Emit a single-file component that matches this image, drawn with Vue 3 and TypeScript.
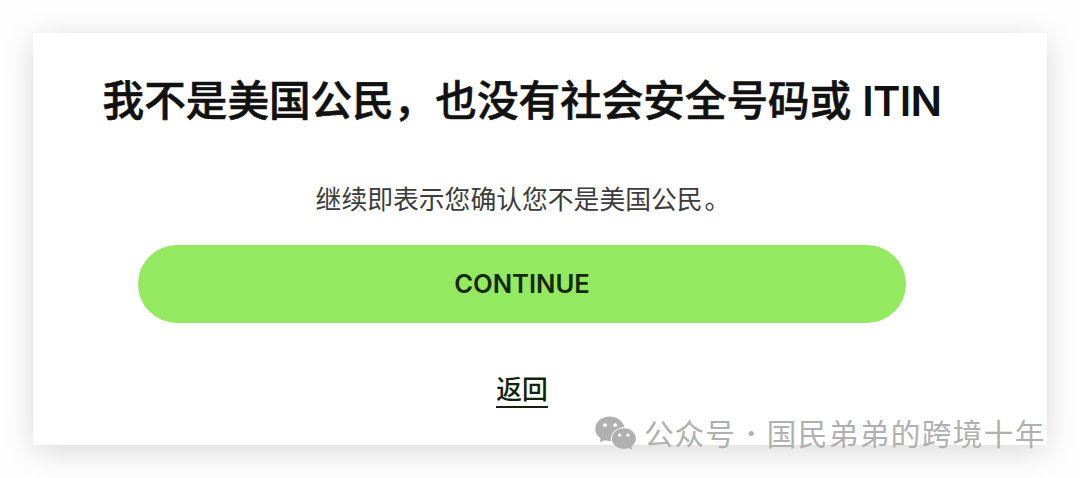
<script setup lang="ts">
import { ref } from 'vue'

const title = '我不是美国公民，也没有社会安全号码或'
const confirmed = ref(false)

function confirm() {
  confirmed.value = true
}

function back() {
  confirmed.value = false
}
</script>

<template>
  <div class="page">
    <main class="card">
      <h1>
        <span lang="zh-CN">{{ title }}</span><span class="itin">ITIN</span>
      </h1>
      <p>继续即表示您确认您不是美国公民<span class="stop">。</span></p>
      <button class="continue" @click="confirm">CONTINUE</button>
      <a class="back" @click="back">返回</a>
    </main>
    <aside class="watermark">
      <svg width="42" height="36" viewBox="0 0 42 36">
        <path
          d="M14.800 1.500C6.800 1.500.2 7 .2 13.900c0 3.800 2.100 7.200 5.400 9.400L4.900 27.500l4.700-2.300c1.600.5 3.400.8 5.200.8h1.400C14.800 18.500 20.500 12.600 29.300 12 27.900 6 22 1.500 14.800 1.500Z"
        />
        <path
          d="M28.700 13.300C22.100 13.300 16.900 18 16.900 23.600S22.100 33.900 28.700 33.900c1.800 0 3.500-.3 5-.9l3.300 1.700-.5-3.200c2.700-1.900 4.400-4.700 4.400-7.900 0-5.700-5.300-10.300-12.200-10.300Z"
        />
        <g class="eyes">
          <circle cx="10" cy="10.200" r="1.900" />
          <circle cx="20.200" cy="10.200" r="1.900" />
          <circle cx="24.700" cy="20.200" r="1.600" />
          <circle cx="32.900" cy="20.200" r="1.600" />
        </g>
      </svg>
      <span class="account">公众号</span>
      <span class="dot">·</span>
      <span class="name">国民弟弟的跨境十年</span>
    </aside>
  </div>
</template>

<style>
body {
  margin: 0;
  background-color: #fefefe;
}
</style>

<style scoped>
.page {
  position: relative;
  box-sizing: border-box;
  width: 1080px;
  height: 478px;
  padding: 33px;
  overflow: hidden;
  background-color: #fefefe;
  font-family: Inter, 'Noto Sans CJK SC', sans-serif;
}
.card {
  box-sizing: border-box;
  width: 1014px;
  height: 412px;
  padding-right: 36px;
  display: flex;
  flex-direction: column;
  align-items: center;
  background-color: white;
  box-shadow: 0 6px 30px rgba(0, 0, 0, 0.15);
}
h1 {
  margin: 35px 0 0;
  height: 60px;
  line-height: 60px;
  color: #111;
  font-family: 'Noto Sans CJK SC', sans-serif;
  font-size: 41.6px;
  font-weight: 500;
  -webkit-text-stroke: 0.6px #111;
  white-space: nowrap;
}
.itin {
  margin-left: 11px;
  font-family: Inter, sans-serif;
  font-size: 41.5px;
  font-weight: 600;
  letter-spacing: -0.7px;
  -webkit-text-stroke: 0;
}
p {
  margin: 52px 0 0;
  height: 36px;
  line-height: 36px;
  color: #3c3c3c;
  font-family: 'Noto Sans CJK SC', sans-serif;
  font-size: 25.8px;
  white-space: nowrap;
}
.stop {
  margin: 0 -2px 0 2px;
}
.continue {
  width: 768px;
  height: 78px;
  margin-top: 29px;
  padding: 0 0 1px;
  border: none;
  border-radius: 39px;
  background-color: #93e960;
  color: #14290a;
  font-family: Inter, sans-serif;
  font-size: 25.6px;
  font-weight: 600;
  cursor: pointer;
}
.back {
  margin-top: 47px;
  height: 36px;
  line-height: 35px;
  border-bottom: 2px solid #10240a;
  color: #10240a;
  font-family: 'Noto Sans CJK SC', sans-serif;
  font-size: 25.8px;
  font-weight: 500;
  cursor: pointer;
}
.watermark {
  position: absolute;
  left: 595px;
  top: 413px;
  height: 40px;
  display: flex;
  align-items: center;
  color: #b0b0b0;
  font-family: 'Noto Sans CJK SC', sans-serif;
  font-size: 29.6px;
  line-height: 40px;
  white-space: nowrap;
}
.watermark svg {
  fill: #b0b0b0;
}
.watermark .eyes {
  fill: white;
}
.account {
  margin-left: 7px;
  letter-spacing: 1px;
}
.dot {
  width: 31px;
  font-family: Inter, sans-serif;
  font-weight: 700;
  text-align: center;
}
.name {
  letter-spacing: 1.4px;
}
</style>
